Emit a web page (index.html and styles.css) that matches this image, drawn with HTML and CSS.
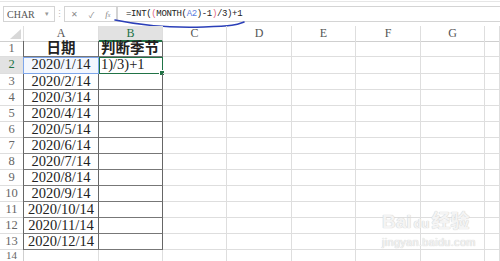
FILE: index.html
```html
<!DOCTYPE html>
<html lang="zh-CN">
<head>
  <meta charset="UTF-8">
  <title>判断季节</title>
  <link rel="stylesheet" href="styles.css">
</head>
<body>
  <div class="fbar">
    <div class="namebox"><span>CHAR</span><span class="arrow">▾</span></div>
    <span class="dots">⋮</span>
    <div class="btns"><span>✕</span><span>✓</span><span class="fx">f<small>x</small></span></div>
    <div class="formula">=INT(<span class="p">(</span>MONTH(<span class="ref">A2</span>)-1<span class="p">)</span>/3)+1</div>
    <svg class="mark" width="140" height="12" viewBox="0 0 140 12">
      <path d="M1 1 C 30 7, 60 9, 90 8 S 122 6, 130 3" fill="none" stroke="#2b3fb8" stroke-width="1.6" stroke-linecap="round"/>
    </svg>
  </div>

  <div class="sheet">
    <div class="row head">
      <div class="corner"><span class="tri"></span></div>
      <div>A</div><div class="sel">B</div><div>C</div><div>D</div><div>E</div><div>F</div><div>G</div><div></div>
    </div>
    <div class="row"><div class="rh">1</div><div class="a t">日期</div><div class="b t left">判断季节</div><div></div><div></div><div></div><div></div><div></div><div></div></div>
    <div class="row tall"><div class="rh on">2</div><div class="a ref-cell">2020/1/14</div><div class="b active left">1)/3)+1<span class="handle"></span></div><div></div><div></div><div></div><div></div><div></div><div></div></div>
    <div class="row"><div class="rh">3</div><div class="a">2020/2/14</div><div class="b"></div><div></div><div></div><div></div><div></div><div></div><div></div></div>
    <div class="row"><div class="rh">4</div><div class="a">2020/3/14</div><div class="b"></div><div></div><div></div><div></div><div></div><div></div><div></div></div>
    <div class="row"><div class="rh">5</div><div class="a">2020/4/14</div><div class="b"></div><div></div><div></div><div></div><div></div><div></div><div></div></div>
    <div class="row"><div class="rh">6</div><div class="a">2020/5/14</div><div class="b"></div><div></div><div></div><div></div><div></div><div></div><div></div></div>
    <div class="row"><div class="rh">7</div><div class="a">2020/6/14</div><div class="b"></div><div></div><div></div><div></div><div></div><div></div><div></div></div>
    <div class="row"><div class="rh">8</div><div class="a">2020/7/14</div><div class="b"></div><div></div><div></div><div></div><div></div><div></div><div></div></div>
    <div class="row"><div class="rh">9</div><div class="a">2020/8/14</div><div class="b"></div><div></div><div></div><div></div><div></div><div></div><div></div></div>
    <div class="row"><div class="rh">10</div><div class="a">2020/9/14</div><div class="b"></div><div></div><div></div><div></div><div></div><div></div><div></div></div>
    <div class="row"><div class="rh">11</div><div class="a">2020/10/14</div><div class="b"></div><div></div><div></div><div></div><div></div><div></div><div></div></div>
    <div class="row"><div class="rh">12</div><div class="a">2020/11/14</div><div class="b"></div><div></div><div></div><div></div><div></div><div></div><div></div></div>
    <div class="row"><div class="rh">13</div><div class="a">2020/12/14</div><div class="b"></div><div></div><div></div><div></div><div></div><div></div><div></div></div>
    <div class="row last"><div class="rh">14</div><div></div><div></div><div></div><div></div><div></div><div></div><div></div><div></div></div>

    <div class="watermark">
      <div class="wm-top">Bai<span class="paw">du</span>经验</div>
      <div class="wm-url">jingyan.baidu.com</div>
    </div>
  </div>
</body>
</html>
```

FILE: styles.css
```css
body {
  margin: 0;
  width: 500px;
  height: 261px;
  overflow: hidden;
  background-color: #fff;
  font-family: 'Liberation Serif', 'Noto Sans CJK SC', serif;
  color: #222;
}
.fbar {
  position: relative;
  display: flex;
  align-items: center;
  height: 25px;
  margin-top: 1px;
  border-top: 1px solid #e6e6e6;
  padding-left: 3px;
  box-sizing: border-box;
}
.namebox {
  width: 52px;
  height: 16px;
  border: 1px solid #d4d4d4;
  box-sizing: border-box;
  display: flex;
  align-items: center;
  justify-content: space-between;
  padding: 0 5px 0 3px;
  font-size: 10px;
  color: #555;
}
.namebox .arrow {
  font-size: 7px;
  color: #999;
}
.dots {
  width: 9px;
  text-align: center;
  font-size: 9px;
  color: #bbb;
}
.btns {
  width: 53px;
  height: 16px;
  border: 1px solid #d4d4d4;
  box-sizing: border-box;
  display: flex;
  align-items: center;
  justify-content: space-around;
  font-size: 8px;
  color: #888;
}
.btns .fx {
  font-style: italic;
  font-size: 9px;
}
.btns .fx small {
  font-size: 6px;
}
.formula {
  flex: 1;
  height: 16px;
  border: 1px solid #d4d4d4;
  border-right: none;
  box-sizing: border-box;
  padding-left: 8px;
  font-family: 'Liberation Mono', monospace;
  font-size: 9px;
  letter-spacing: -0.35px;
  line-height: 14px;
  color: #222;
}
.formula .p {
  color: #e06b86;
}
.formula .ref {
  color: #5a7ee0;
}
.mark {
  position: absolute;
  left: 114px;
  top: 17px;
}

.sheet {
  position: relative;
}
.row {
  display: grid;
  grid-template-columns: 24px 75px 64px 64px 65px 64px 65px 64px 1fr;
  height: 16px;
}
.row.tall {
  height: 17px;
}
.row.head {
  height: 15px;
}
.row > div {
  border-right: 1px solid #dedede;
  border-bottom: 1px solid #dedede;
  box-sizing: border-box;
  font-size: 14.5px;
  line-height: 15px;
  text-align: center;
  position: relative;
  white-space: nowrap;
}
.row.head > div {
  font-size: 12px;
  line-height: 14px;
  color: #555;
  border-bottom-color: #cfcfcf;
}
.row.head > div.sel {
  background-color: #e2e2e2;
  color: #217346;
  border-bottom: 2px solid #217346;
}
.corner .tri {
  position: absolute;
  right: 2px;
  bottom: 2px;
  width: 0;
  height: 0;
  border-left: 11px solid transparent;
  border-bottom: 10px solid #d8d8d8;
}
.row > div.rh {
  font-size: 12.5px;
  color: #666;
  border-right-color: #cfcfcf;
}
.row.last > div.rh {
  font-size: 11px;
  line-height: 10px;
}
.row > div.rh.on {
  background-color: #e2e2e2;
  color: #217346;
}
.row > div.a {
  border-right: 1px solid #666;
  border-bottom: 1px solid #777;
  border-left: 1px solid #666;
  margin-left: -1px;
}
.row > div.b {
  border-right: 1px solid #666;
  border-bottom: 1px solid #777;
}
.row > div.t {
  font-weight: bold;
}
.row > div.left {
  text-align: left;
  padding-left: 2px;
}
.row > div.ref-cell {
  outline: 1.5px solid #7ea6ea;
  outline-offset: -1px;
  background-color: #f3f7fe;
}
.row > div.active {
  outline: 1.5px solid #217346;
  outline-offset: -1px;
}
.handle {
  position: absolute;
  right: -3px;
  bottom: -3px;
  width: 4px;
  height: 4px;
  background-color: #217346;
  border: 1px solid #fff;
}
.watermark {
  position: absolute;
  left: 382px;
  top: 185px;
  color: #f4f4f4;
  text-shadow: 0 0 1px #d0d0d0, 0 0 1px #d0d0d0;
  font-family: 'Liberation Sans', 'Noto Sans CJK SC', sans-serif;
}
.wm-top {
  font-size: 19px;
  font-weight: bold;
  line-height: 22px;
}
.wm-top .paw {
  font-size: 13px;
  margin: 0 2px;
}
.wm-url {
  font-size: 11px;
  line-height: 14px;
  letter-spacing: 0.3px;
}
```
